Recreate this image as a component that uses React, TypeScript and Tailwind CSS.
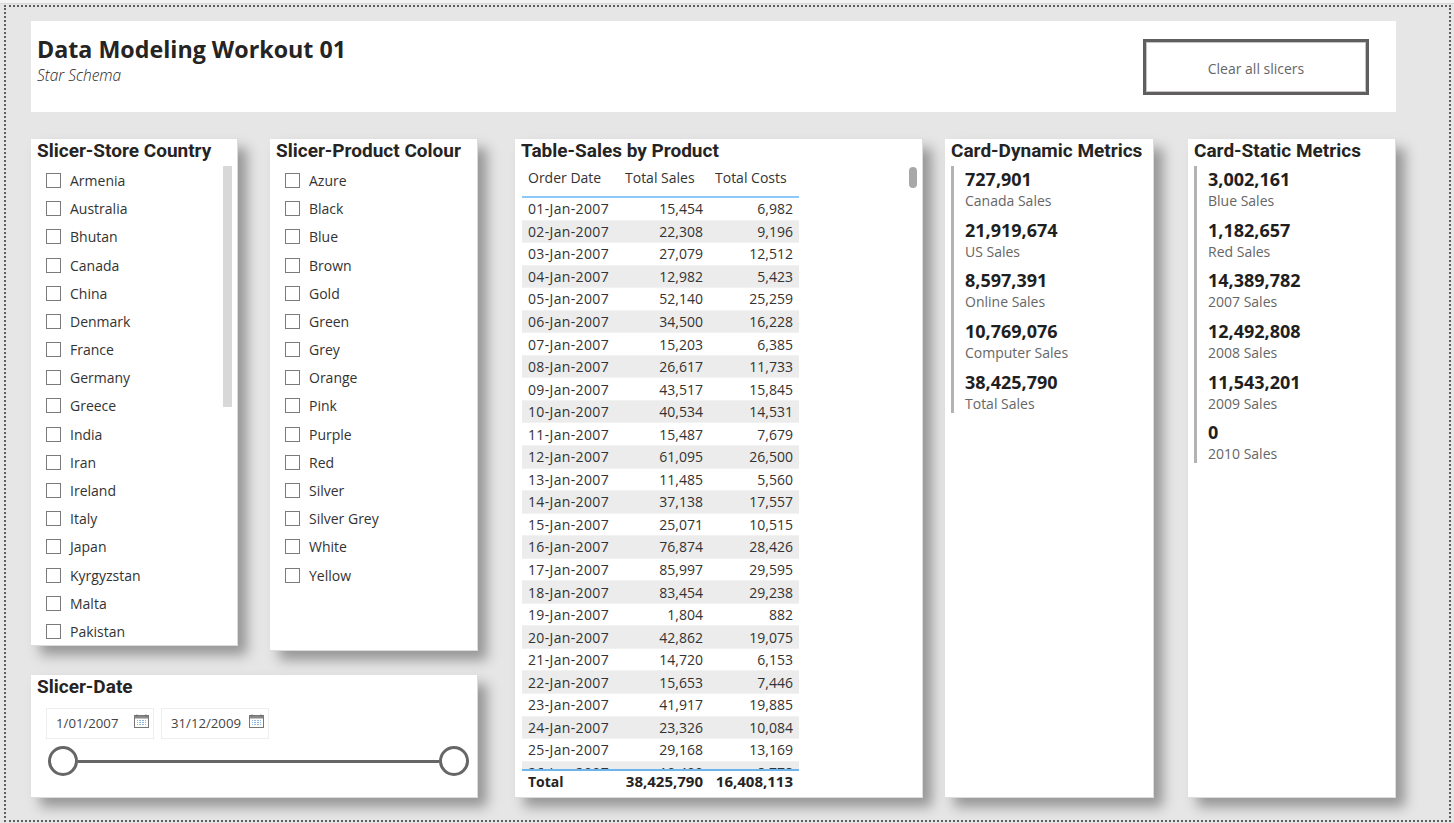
const countries = ['Armenia', 'Australia', 'Bhutan', 'Canada', 'China', 'Denmark', 'France', 'Germany', 'Greece', 'India', 'Iran', 'Ireland', 'Italy', 'Japan', 'Kyrgyzstan', 'Malta', 'Pakistan']
const colours = ['Azure', 'Black', 'Blue', 'Brown', 'Gold', 'Green', 'Grey', 'Orange', 'Pink', 'Purple', 'Red', 'Silver', 'Silver Grey', 'White', 'Yellow']

const rows = [
  ['01-Jan-2007', '15,454', '6,982'],
  ['02-Jan-2007', '22,308', '9,196'],
  ['03-Jan-2007', '27,079', '12,512'],
  ['04-Jan-2007', '12,982', '5,423'],
  ['05-Jan-2007', '52,140', '25,259'],
  ['06-Jan-2007', '34,500', '16,228'],
  ['07-Jan-2007', '15,203', '6,385'],
  ['08-Jan-2007', '26,617', '11,733'],
  ['09-Jan-2007', '43,517', '15,845'],
  ['10-Jan-2007', '40,534', '14,531'],
  ['11-Jan-2007', '15,487', '7,679'],
  ['12-Jan-2007', '61,095', '26,500'],
  ['13-Jan-2007', '11,485', '5,560'],
  ['14-Jan-2007', '37,138', '17,557'],
  ['15-Jan-2007', '25,071', '10,515'],
  ['16-Jan-2007', '76,874', '28,426'],
  ['17-Jan-2007', '85,997', '29,595'],
  ['18-Jan-2007', '83,454', '29,238'],
  ['19-Jan-2007', '1,804', '882'],
  ['20-Jan-2007', '42,862', '19,075'],
  ['21-Jan-2007', '14,720', '6,153'],
  ['22-Jan-2007', '15,653', '7,446'],
  ['23-Jan-2007', '41,917', '19,885'],
  ['24-Jan-2007', '23,326', '10,084'],
  ['25-Jan-2007', '29,168', '13,169'],
  ['26-Jan-2007', '10,400', '8,778'],
]

const dynamicMetrics = [
  ['727,901', 'Canada Sales'],
  ['21,919,674', 'US Sales'],
  ['8,597,391', 'Online Sales'],
  ['10,769,076', 'Computer Sales'],
  ['38,425,790', 'Total Sales'],
]
const staticMetrics = [
  ['3,002,161', 'Blue Sales'],
  ['1,182,657', 'Red Sales'],
  ['14,389,782', '2007 Sales'],
  ['12,492,808', '2008 Sales'],
  ['11,543,201', '2009 Sales'],
  ['0', '2010 Sales'],
]

const card = 'bg-white shadow-[9px_9px_12px_rgba(0,0,0,0.35)] border-r border-b border-[#dcdcdc]'

function CardTitle({ children }: { children: string }) {
  return (
    <h2 className="pl-[6px] h-[27px] leading-[24px] text-[19px] font-bold text-[#252423] font-['Roboto',sans-serif]">
      {children}
    </h2>
  )
}

function CheckList({ items }: { items: string[] }) {
  return (
    <ul className="flex-1 pt-[0.4px]">
      {items.map((item) => (
        <li key={item} className="flex items-center h-[28.2px] pl-[15px] text-[14px] text-[#333333]">
          <span className="w-[15px] h-[15px] border border-[#7b7b7b] shrink-0" />
          <span className="ml-[9px]">{item}</span>
        </li>
      ))}
    </ul>
  )
}

function CalendarIcon() {
  return (
    <svg width="15" height="15" viewBox="0 0 15 15" className="shrink-0">
      <rect x="0.5" y="1.5" width="14" height="12" fill="#fff" stroke="#777" />
      <rect x="1" y="2" width="13" height="2.5" fill="#8a8a8a" />
      <path d="M3 0.5v2M12 0.5v2" stroke="#666" />
      <path d="M3 6.5h9M3 8.5h9M3 10.5h9" stroke="#8fb8dc" />
      <path d="M4.5 5.5v6.5M7.5 5.5v6.5M10.5 5.5v6.5" stroke="#ffffff" />
    </svg>
  )
}

function DateBox({ value }: { value: string }) {
  return (
    <div className="flex items-center justify-between w-[108px] h-[31px] border border-[#eeeeee] pl-[9px] pr-[4px] text-[13.2px] text-[#444444]">
      <span className="pt-[1px]">{value}</span>
      <span className="-mt-[5px]">
        <CalendarIcon />
      </span>
    </div>
  )
}

function MetricCard({ title, metrics, width }: { title: string; metrics: string[][]; width: string }) {
  return (
    <section className={`${card} ${width} h-[659px]`}>
      <CardTitle>{title}</CardTitle>
      <div className="ml-[6px] border-l-[3px] border-[#b3b3b3] pl-[11px]">
        {metrics.map(([value, label]) => (
          <div key={label} className="h-[50.7px] last:h-[44px] pt-[1px]">
            <div className="text-[18px] leading-[24px] font-bold text-[#1f1f1f]">{value}</div>
            <div className="text-[14px] leading-[20px] text-[#666666]">{label}</div>
          </div>
        ))}
      </div>
    </section>
  )
}

export default function App() {
  return (
    <div className="w-[1454px] h-[823px] overflow-hidden bg-[#e6e6e6] font-['Open_Sans',sans-serif]">
      <div className="h-[4px] bg-[#f4f4f4] border-b border-[#d8d8d8]" />
      <div className="ml-[4px] mt-[1px] w-[1447px] h-[817px] border-2 border-dotted border-[#5f5f5f] pl-[25px] pt-[14px]">
        <header className="flex items-center justify-between w-[1365px] h-[91px] bg-white pl-[6px] pr-[27px]">
          <div className="-mt-[15px]">
            <h1 className="text-[23.25px] leading-[32px] font-bold text-[#252423]">Data Modeling Workout 01</h1>
            <p className="text-[15.5px] leading-[20px] italic font-light text-[#252423]">Star Schema</p>
          </div>
          <button className="w-[226px] h-[56px] pt-[3px] border-[3px] border-[#605e5e] shadow-[inset_0_0_0_1px_#c4c4c4] text-[14px] text-[#666666]">
            Clear all slicers
          </button>
        </header>

        <div className="flex mt-[27px]">
          <div className="w-[447px]">
            <div className="flex items-start justify-between h-[536px]">
              <section className={`${card} w-[207px] h-[507px]`}>
                <CardTitle>Slicer-Store Country</CardTitle>
                <div className="flex items-start">
                  <CheckList items={countries} />
                  <div className="w-[9px] h-[241px] mr-[5px] bg-[#d8d8d8]" />
                </div>
              </section>
              <section className={`${card} w-[208px] h-[512px]`}>
                <CardTitle>Slicer-Product Colour</CardTitle>
                <CheckList items={colours} />
              </section>
            </div>
            <section className={`${card} h-[123px]`}>
              <CardTitle>Slicer-Date</CardTitle>
              <div className="flex gap-[7px] pl-[15px] pt-[6px]">
                <DateBox value="1/01/2007" />
                <DateBox value="31/12/2009" />
              </div>
              <div className="flex items-center pl-[17px] pr-[8px] mt-[7px]">
                <span className="w-[30px] h-[30px] rounded-full border-[3px] border-[#666666] bg-white shrink-0" />
                <span className="flex-1 h-[3px] bg-[#666666]" />
                <span className="w-[30px] h-[30px] rounded-full border-[3px] border-[#666666] bg-white shrink-0" />
              </div>
            </section>
          </div>

          <section className={`${card} ml-[37px] w-[408px] h-[659px]`}>
            <CardTitle>Table-Sales by Product</CardTitle>
            <div className="flex items-start pl-[7px]">
              <div className="w-[277px] text-[14px] text-[#333333]">
                <div className="flex h-[32px] pt-[1px] leading-[22px] border-b-[2px] border-[#8cc8f8]">
                  <span className="w-[96px] pl-[6px]">Order Date</span>
                  <span className="w-[91px] pl-[7px]">Total Sales</span>
                  <span className="w-[90px] pl-[6px]">Total Costs</span>
                </div>
                <div className="h-[571px] overflow-hidden">
                  {rows.map((row, i) => (
                    <div
                      key={row[0]}
                      className={`flex items-center h-[22.56px] border-b border-[#f2f2f2] ${i % 2 === 1 ? 'bg-[#ececec]' : 'bg-white'}`}
                    >
                      <span className="w-[96px] pl-[6px] tracking-[0.35px]">{row[0]}</span>
                      <span className="w-[91px] pr-[6px] text-right">{row[1]}</span>
                      <span className="w-[90px] pr-[6px] text-right">{row[2]}</span>
                    </div>
                  ))}
                </div>
                <div className="flex items-center h-[25px] pb-[2px] border-t-[2px] border-[#6cb4ee] font-bold text-[#252423]">
                  <span className="w-[96px] pl-[6px]">Total</span>
                  <span className="w-[91px] pr-[6px] text-right text-[15px]">38,425,790</span>
                  <span className="w-[90px] pr-[6px] text-right text-[15px]">16,408,113</span>
                </div>
              </div>
              <div className="ml-[110px] mt-[1px] w-[8px] h-[21px] rounded-full bg-[#a8a8a8]" />
            </div>
          </section>

          <div className="ml-[22px]">
            <MetricCard title="Card-Dynamic Metrics" metrics={dynamicMetrics} width="w-[209px]" />
          </div>
          <div className="ml-[34px]">
            <MetricCard title="Card-Static Metrics" metrics={staticMetrics} width="w-[208px]" />
          </div>
        </div>
      </div>
    </div>
  )
}
